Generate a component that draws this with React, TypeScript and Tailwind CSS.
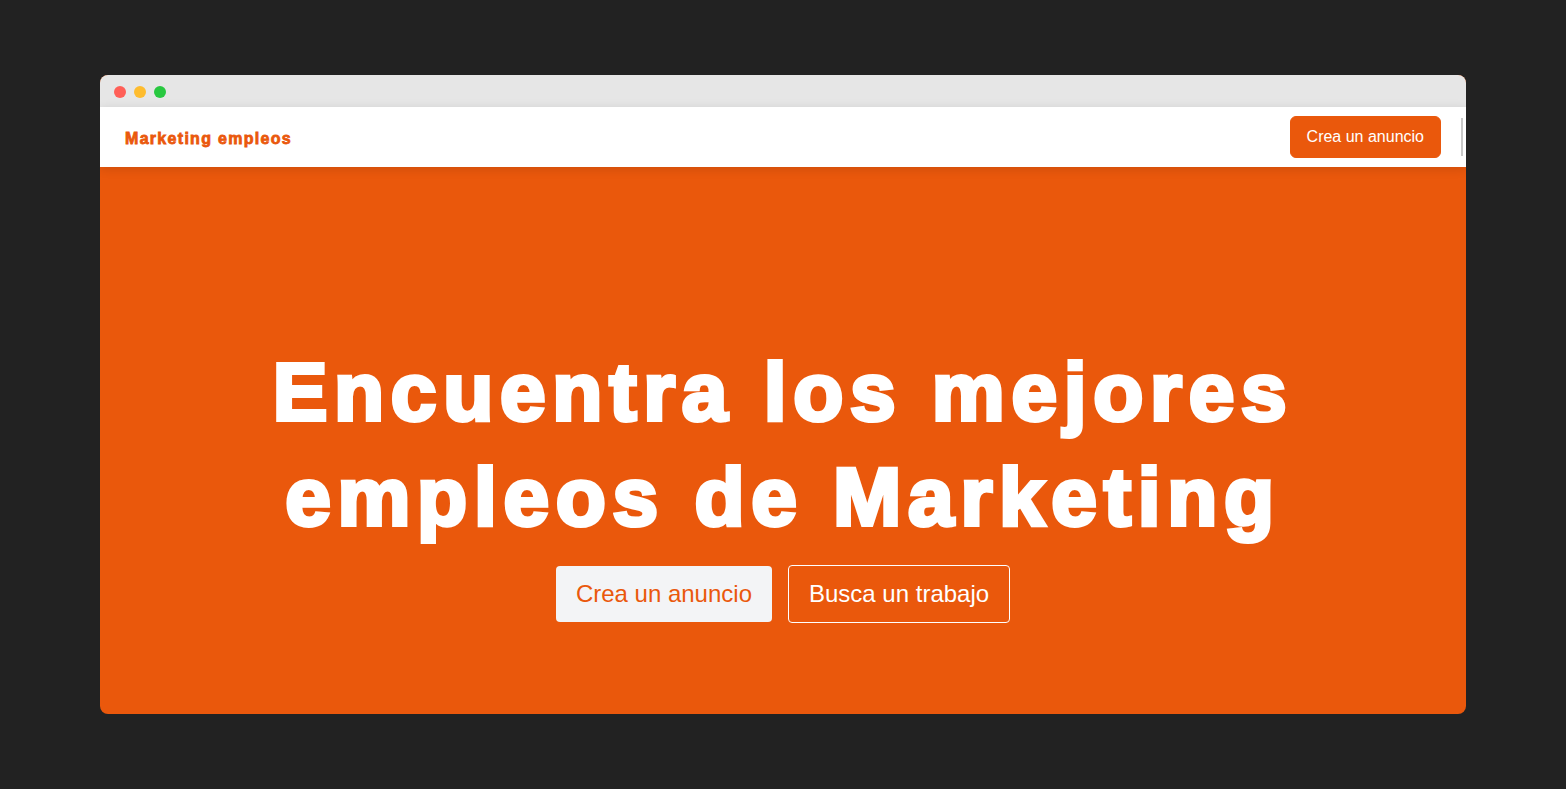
export default function App() {
  return (
    <div className="h-screen w-full bg-[#222222] px-[100px] py-[75px]">
      <div className="flex h-full flex-col overflow-hidden rounded-lg bg-[#ea580c] font-['Liberation_Sans',Arial,sans-serif]">
        <div className="flex h-8 items-center gap-2 bg-[#e6e6e6] px-[14px] pt-[2px]">
          <span className="h-3 w-3 rounded-full bg-[#ff5f57]" />
          <span className="h-3 w-3 rounded-full bg-[#febc2e]" />
          <span className="h-3 w-3 rounded-full bg-[#28c840]" />
        </div>

        <header className="relative z-10 flex h-[60px] items-center justify-between bg-white px-[25px] shadow-[0_2px_10px_rgba(0,0,0,0.12)]">
          <a
            href="#"
            className="pt-[3px] text-[16px] font-bold tracking-[1.3px] text-[#ea580c] [-webkit-text-stroke:0.8px_#ea580c]"
          >
            Marketing empleos
          </a>
          <button className="rounded-md border border-[#ea580c] bg-[#ea580c] px-4 py-2 text-base text-white">
            Crea un anuncio
          </button>
          <span className="absolute right-[3px] top-[11px] h-[38px] w-[2px] bg-[#c8c8c8]" />
        </header>

        <section className="flex flex-1 flex-col items-center pt-[172px] text-center">
          <h1 className="text-[82px] font-bold leading-[105px] tracking-[0.082em] text-white [-webkit-text-stroke:4px_white]">
            Encuentra los mejores
            <br />
            empleos de Marketing
          </h1>
          <div className="mt-[16px] flex items-center gap-4">
            <button className="rounded bg-[#f3f4f6] px-5 py-3 text-2xl text-[#ea580c]">
              Crea un anuncio
            </button>
            <button className="rounded border border-white px-5 py-3 text-2xl text-white">
              Busca un trabajo
            </button>
          </div>
        </section>
      </div>
    </div>
  );
}
